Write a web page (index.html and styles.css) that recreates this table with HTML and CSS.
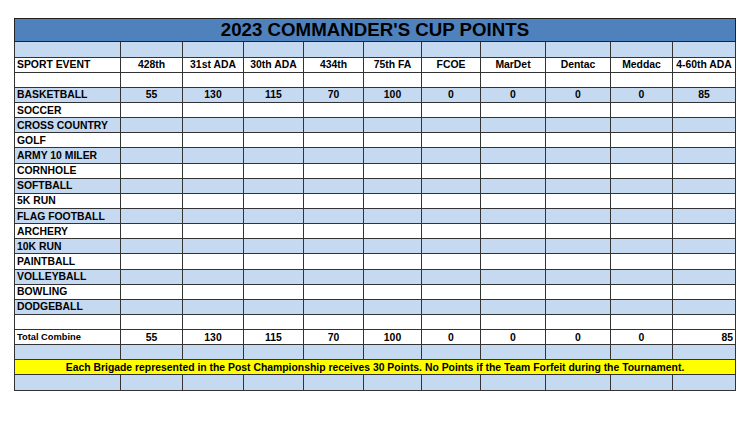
FILE: index.html
```html
<!DOCTYPE html>
<html>
<head>
<meta charset="utf-8">
<link rel="stylesheet" href="styles.css">
</head>
<body>
<table class="cup">
<colgroup>
<col class="c-event"><col class="c1"><col class="c2"><col class="c3"><col class="c4"><col class="c5"><col class="c6"><col class="c7"><col class="c8"><col class="c9"><col class="c10">
</colgroup>
<tr class="title"><td colspan="11">2023 COMMANDER'S CUP POINTS</td></tr>
<tr class="blue"><td></td><td></td><td></td><td></td><td></td><td></td><td></td><td></td><td></td><td></td><td></td></tr>
<tr class="head"><td class="ev">SPORT EVENT</td><td>428th</td><td>31st ADA</td><td>30th ADA</td><td>434th</td><td>75th FA</td><td>FCOE</td><td>MarDet</td><td>Dentac</td><td>Meddac</td><td>4-60th ADA</td></tr>
<tr><td></td><td></td><td></td><td></td><td></td><td></td><td></td><td></td><td></td><td></td><td></td></tr>
<tr class="blue num"><td class="ev">BASKETBALL</td><td>55</td><td>130</td><td>115</td><td>70</td><td>100</td><td>0</td><td>0</td><td>0</td><td>0</td><td>85</td></tr>
<tr><td class="ev">SOCCER</td><td></td><td></td><td></td><td></td><td></td><td></td><td></td><td></td><td></td><td></td></tr>
<tr class="blue"><td class="ev">CROSS COUNTRY</td><td></td><td></td><td></td><td></td><td></td><td></td><td></td><td></td><td></td><td></td></tr>
<tr><td class="ev">GOLF</td><td></td><td></td><td></td><td></td><td></td><td></td><td></td><td></td><td></td><td></td></tr>
<tr class="blue"><td class="ev">ARMY 10 MILER</td><td></td><td></td><td></td><td></td><td></td><td></td><td></td><td></td><td></td><td></td></tr>
<tr><td class="ev">CORNHOLE</td><td></td><td></td><td></td><td></td><td></td><td></td><td></td><td></td><td></td><td></td></tr>
<tr class="blue"><td class="ev">SOFTBALL</td><td></td><td></td><td></td><td></td><td></td><td></td><td></td><td></td><td></td><td></td></tr>
<tr><td class="ev">5K RUN</td><td></td><td></td><td></td><td></td><td></td><td></td><td></td><td></td><td></td><td></td></tr>
<tr class="blue"><td class="ev">FLAG FOOTBALL</td><td></td><td></td><td></td><td></td><td></td><td></td><td></td><td></td><td></td><td></td></tr>
<tr><td class="ev">ARCHERY</td><td></td><td></td><td></td><td></td><td></td><td></td><td></td><td></td><td></td><td></td></tr>
<tr class="blue"><td class="ev">10K RUN</td><td></td><td></td><td></td><td></td><td></td><td></td><td></td><td></td><td></td><td></td></tr>
<tr><td class="ev">PAINTBALL</td><td></td><td></td><td></td><td></td><td></td><td></td><td></td><td></td><td></td><td></td></tr>
<tr class="blue"><td class="ev">VOLLEYBALL</td><td></td><td></td><td></td><td></td><td></td><td></td><td></td><td></td><td></td><td></td></tr>
<tr><td class="ev">BOWLING</td><td></td><td></td><td></td><td></td><td></td><td></td><td></td><td></td><td></td><td></td></tr>
<tr class="blue"><td class="ev">DODGEBALL</td><td></td><td></td><td></td><td></td><td></td><td></td><td></td><td></td><td></td><td></td></tr>
<tr><td></td><td></td><td></td><td></td><td></td><td></td><td></td><td></td><td></td><td></td><td></td></tr>
<tr class="num total"><td class="ev small">Total Combine</td><td>55</td><td>130</td><td>115</td><td>70</td><td>100</td><td>0</td><td>0</td><td>0</td><td>0</td><td class="right">85</td></tr>
<tr class="blue"><td></td><td></td><td></td><td></td><td></td><td></td><td></td><td></td><td></td><td></td><td></td></tr>
<tr class="note"><td colspan="11">Each Brigade represented in the Post Championship receives 30 Points. No Points if the Team Forfeit during the Tournament.</td></tr>
<tr class="blue"><td></td><td></td><td></td><td></td><td></td><td></td><td></td><td></td><td></td><td></td><td></td></tr>
</table>
</body>
</html>
```
FILE: styles.css
```css
html, body {
  margin: 0;
  padding: 0;
  background: #ffffff;
}
body {
  padding: 18px 0 0 14px;
  font-family: "Liberation Sans", Arial, sans-serif;
  font-weight: bold;
  color: #000;
}
.cup {
  border-collapse: collapse;
  table-layout: fixed;
  width: 721px;
  border: 1px solid #222;
}
.c-event { width: 106px; }
.c1 { width: 62px; }
.c2 { width: 61px; }
.c3 { width: 60px; }
.c4 { width: 60px; }
.c5 { width: 58px; }
.c6 { width: 59px; }
.c7 { width: 65px; }
.c8 { width: 65px; }
.c9 { width: 62px; }
.c10 { width: 63px; }
.cup td {
  border: 1px solid #333333;
  padding: 0 2px;
  height: 14.15px;
  font-size: 10.4px;
  line-height: 13px;
  text-align: center;
  white-space: nowrap;
  overflow: hidden;
}
.cup td.ev {
  text-align: left;
  padding-left: 2px;
}
.cup td.right {
  text-align: right;
}
.cup td.small {
  font-size: 9.3px;
}
.blue td {
  background: #c5d9f1;
}
.title td {
  background: #4f81bd;
  height: 22.4px;
  font-size: 18.7px;
  line-height: 22px;
  border-color: #222;
}
.note td {
  background: #ffff00;
  font-size: 10.4px;
}
```
